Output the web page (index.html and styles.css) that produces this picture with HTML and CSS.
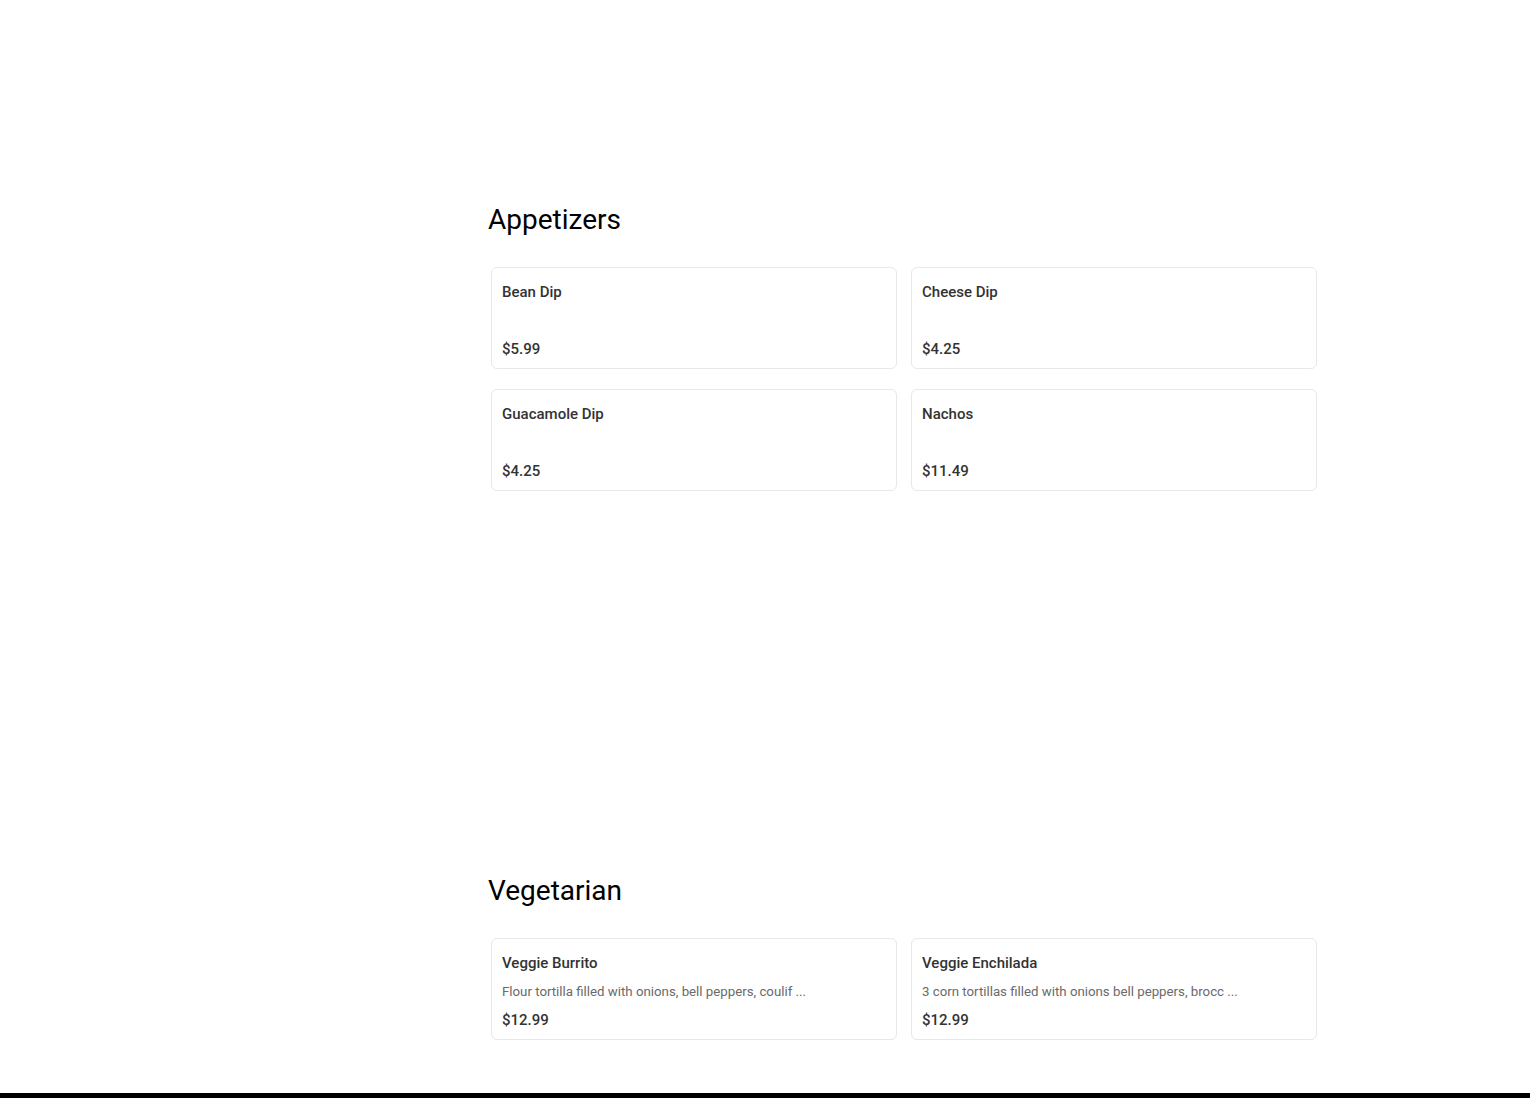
FILE: index.html
```html
<!DOCTYPE html>
<html lang="en">
<head>
<meta charset="utf-8">
<title>Menu</title>
<link rel="stylesheet" href="styles.css">
</head>
<body>
<main class="menu">
  <section class="category category-first">
    <h2 class="category-title">Appetizers</h2>
    <div class="items">
      <div class="item">
        <div class="item-name">Bean Dip</div>
        <div class="item-desc"></div>
        <div class="item-price">$5.99</div>
      </div>
      <div class="item">
        <div class="item-name">Cheese Dip</div>
        <div class="item-desc"></div>
        <div class="item-price">$4.25</div>
      </div>
      <div class="item">
        <div class="item-name">Guacamole Dip</div>
        <div class="item-desc"></div>
        <div class="item-price">$4.25</div>
      </div>
      <div class="item">
        <div class="item-name">Nachos</div>
        <div class="item-desc"></div>
        <div class="item-price">$11.49</div>
      </div>
    </div>
  </section>
  <section class="category category-next">
    <h2 class="category-title">Vegetarian</h2>
    <div class="items">
      <div class="item">
        <div class="item-name">Veggie Burrito</div>
        <div class="item-desc">Flour tortilla filled with onions, bell peppers, coulif ...</div>
        <div class="item-price">$12.99</div>
      </div>
      <div class="item">
        <div class="item-name">Veggie Enchilada</div>
        <div class="item-desc">3 corn tortillas filled with onions bell peppers, brocc ...</div>
        <div class="item-price">$12.99</div>
      </div>
    </div>
  </section>
</main>
<footer class="footer"></footer>
</body>
</html>
```

FILE: styles.css
```css
html, body {
  margin: 0;
  padding: 0;
  background: #ffffff;
}

body {
  font-family: Roboto, "Liberation Sans", Arial, sans-serif;
  color: #333333;
}

.menu {
  margin-left: 488px;
  width: 832px;
  padding-top: 203px;
}

.category-next {
  margin-top: 383px;
}

.category-title {
  margin: 0;
  font-size: 28px;
  font-weight: 400;
  line-height: 33px;
  color: #000000;
}

.items {
  margin-top: 31px;
  padding: 0 3px;
  display: grid;
  grid-template-columns: 1fr 1fr;
  column-gap: 14px;
  row-gap: 20px;
}

.item {
  border: 1px solid #e8e8e8;
  border-radius: 6px;
  padding: 11px 10px 7px 10px;
  display: flex;
  flex-direction: column;
}

.item-name {
  font-size: 15px;
  font-weight: 500;
  line-height: 26px;
  color: #333333;
}

.item-desc {
  margin-top: 4px;
  height: 24px;
  font-size: 13.25px;
  line-height: 24px;
  color: #6a6a6a;
  white-space: nowrap;
  overflow: hidden;
}

.item-price {
  margin-top: 4px;
  font-size: 15px;
  font-weight: 500;
  line-height: 24px;
  color: #333333;
}

.footer {
  margin-top: 53px;
  height: 40px;
  background: #000000;
}
```
